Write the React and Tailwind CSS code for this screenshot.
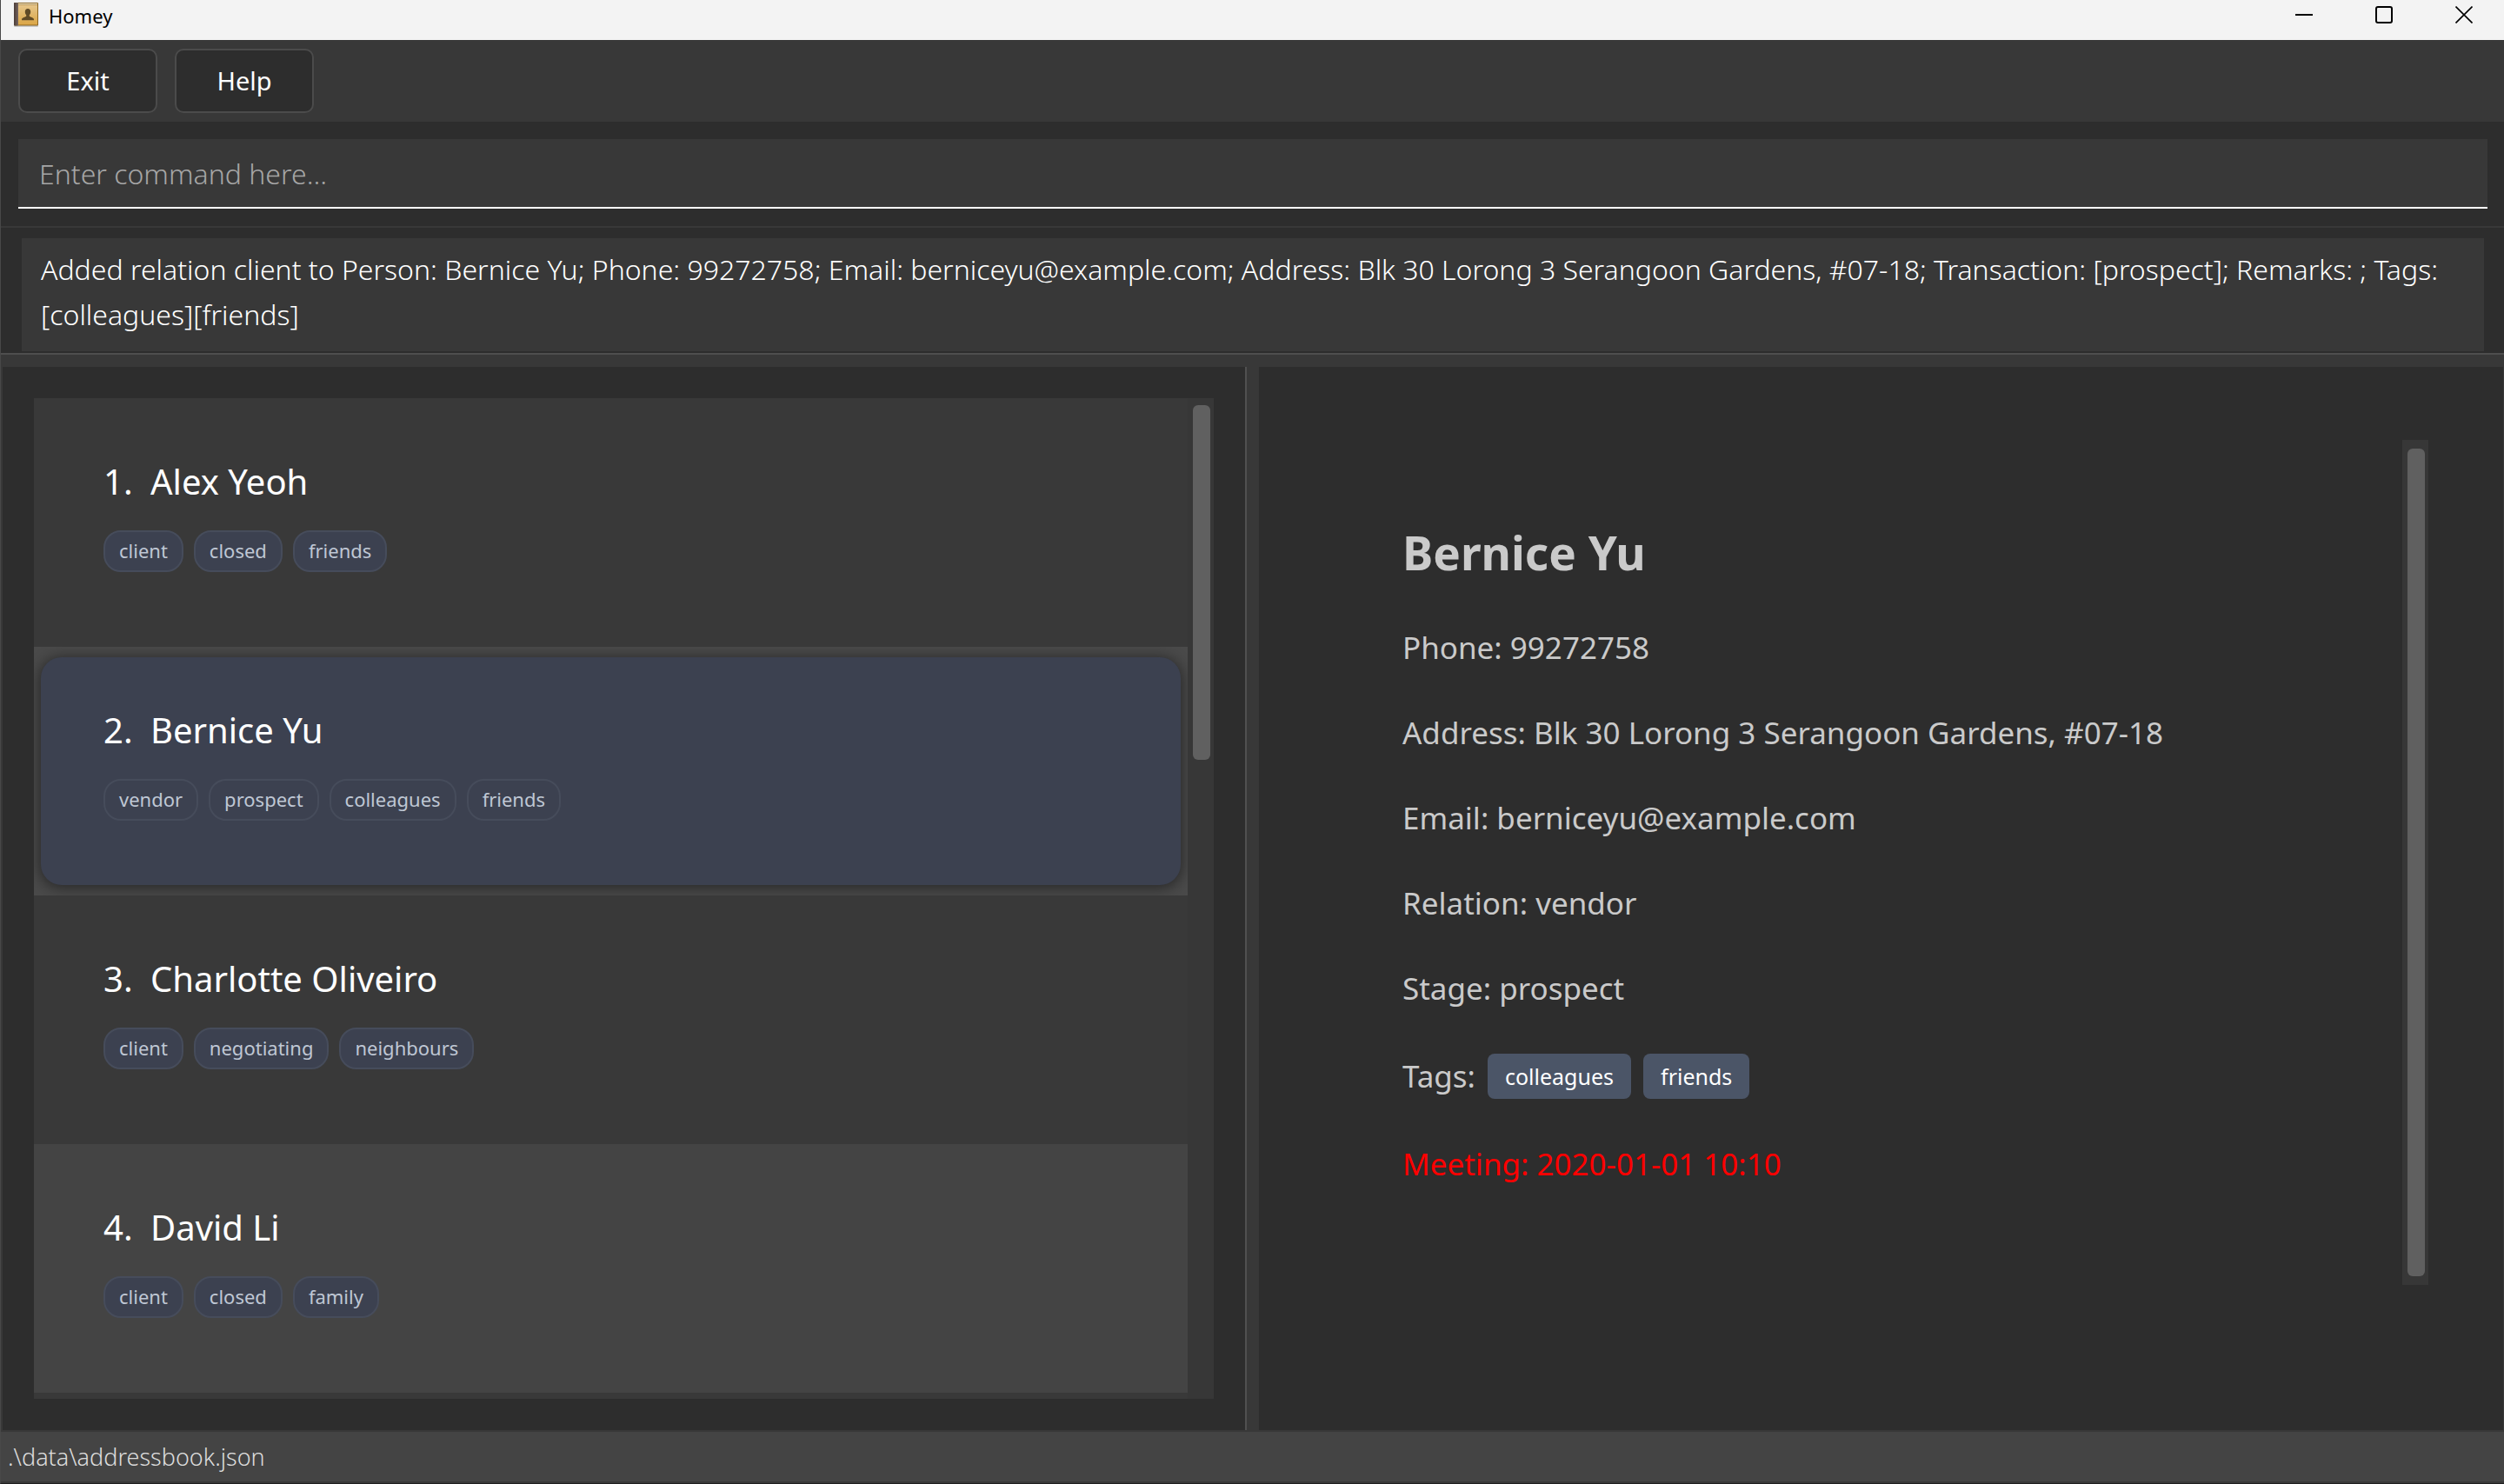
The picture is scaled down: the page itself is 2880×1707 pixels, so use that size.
import React from "react";

const people = [
  { name: "Alex Yeoh", tags: ["client", "closed", "friends"] },
  { name: "Bernice Yu", tags: ["vendor", "prospect", "colleagues", "friends"], selected: true },
  { name: "Charlotte Oliveiro", tags: ["client", "negotiating", "neighbours"] },
  { name: "David Li", tags: ["client", "closed", "family"] },
];

const details = [
  "Phone: 99272758",
  "Address: Blk 30 Lorong 3 Serangoon Gardens, #07-18",
  "Email: berniceyu@example.com",
  "Relation: vendor",
  "Stage: prospect",
];

function AddressBookIcon() {
  return (
    <svg width="30" height="30" viewBox="0 0 30 30" aria-hidden="true">
      <defs>
        <linearGradient id="cover" x1="0" y1="0" x2="0" y2="1">
          <stop offset="0" stopColor="#e6c68b" />
          <stop offset="1" stopColor="#dba646" />
        </linearGradient>
        <linearGradient id="spine" x1="0" y1="0" x2="1" y2="0">
          <stop offset="0" stopColor="#4a3c38" />
          <stop offset="1" stopColor="#75655f" />
        </linearGradient>
      </defs>
      <rect x="1" y="27" width="28" height="2" rx="1" fill="#c9c9c9" />
      <rect x="1" y="1" width="28" height="26.5" rx="1" fill="#8a6420" />
      <rect x="5" y="2" width="23" height="1" fill="#f6ecd2" />
      <rect x="5" y="3.5" width="23" height="23" fill="url(#cover)" />
      <rect x="1" y="1" width="5" height="26.5" rx="1" fill="url(#spine)" />
      <path
        d="M17 8c2 0 3.200 1.300 3.200 3.400 0 1.700-.6 3-1.400 3.800v1.600c.6.900 5.200 1.300 5.200 3.600v.9H10v-.9c0-2.300 4.600-2.700 5.200-3.600v-1.600c-.8-.8-1.400-2.100-1.400-3.800C13.800 9.300 15 8 17 8z"
        fill="#5f4a26"
      />
    </svg>
  );
}

function TitleBar() {
  const control = "flex h-full w-[92px] items-center justify-center";
  return (
    <header className="flex h-[46px] items-center justify-between bg-[#f3f3f3] pb-3 text-black">
      <div className="flex items-center gap-[11px] pl-[14px]">
        <AddressBookIcon />
        <h1 className="pt-[2px] text-[22px] leading-[30px]">Homey</h1>
      </div>
      <div className="flex h-full">
        <button aria-label="Minimize" className={control}>
          <svg width="20" height="20" viewBox="0 0 20 20"><path d="M0 10h20" stroke="#000" strokeWidth="2" /></svg>
        </button>
        <button aria-label="Maximize" className={control}>
          <svg width="20" height="20" viewBox="0 0 20 20"><rect x="1" y="1" width="18" height="18" rx="2" fill="none" stroke="#000" strokeWidth="2" /></svg>
        </button>
        <button aria-label="Close" className={control}>
          <svg width="20" height="20" viewBox="0 0 20 20"><path d="M0.500 0.500l19 19M19.500 0.500l-19 19" stroke="#000" strokeWidth="1.600" /></svg>
        </button>
      </div>
    </header>
  );
}

function PersonCell({ index, person }) {
  const background = person.selected ? "bg-[#4a4a4a]" : index % 2 ? "bg-[#444444]" : "bg-[#393939]";
  const card = person.selected ? "bg-[#3c4150] shadow-[0_2px_16px_2px_rgba(0,0,0,0.45)]" : "";
  return (
    <li className={`h-[286px] overflow-hidden px-2 py-3 ${background}`}>
      <div className={`flex h-full flex-col gap-[28px] rounded-[24px] px-[72px] pt-[56px] ${card}`}>
        <h2 className="flex text-[40px] leading-[56px] text-white">
          <span className="w-[54px]">{index + 1}.</span>
          {person.name}
        </h2>
        <ul className="flex gap-3">
          {person.tags.map((tag) => (
            <li
              key={tag}
              className="h-12 rounded-[20px] border-2 border-[#464c5b] bg-[#3c4150] px-4 text-[22px] leading-[42px] text-[#bfc7d4]"
            >
              {tag}
            </li>
          ))}
        </ul>
      </div>
    </li>
  );
}

export default function App() {
  return (
    <div className="flex h-screen flex-col border-b border-l border-b-[#1f1f1f] border-l-[#484848] bg-[#2d2d2d] font-['Noto_Sans','Open_Sans',sans-serif]">
      <TitleBar />

      <nav className="flex gap-5 bg-[#383838] px-5 py-[10px]">
        {["Exit", "Help"].map((label) => (
          <button
            key={label}
            className="h-[74px] w-[160px] rounded-[10px] border-2 border-[#4b4b4b] bg-[#2d2d2d] text-[29px] text-white"
          >
            {label}
          </button>
        ))}
      </nav>

      <div className="flex py-5 pr-[19px] pl-5">
        <input
          type="text"
          aria-label="Command"
          placeholder="Enter command here..."
          className="h-20 min-w-0 flex-1 border-b-2 border-white bg-[#383838] px-6 text-[32px] font-light text-white outline-none placeholder:text-[#a6a6a6]"
        />
      </div>

      <section className="border-y-2 border-t-[#383838] border-b-[#4e4e4e] pt-3 pr-[23px] pb-[2px] pl-6">
        <p className="h-[130px] bg-[#383838] px-[22px] pt-[10px] text-[32px] leading-[52px] font-light text-white">
          Added relation client to Person: Bernice Yu; Phone: 99272758; Email: berniceyu@example.com; Address: Blk 30
          Lorong 3 Serangoon Gardens, #07-18; Transaction: [prospect]; Remarks: ; Tags: [colleagues][friends]
        </p>
      </section>

      <main className="grid min-h-0 flex-1 grid-cols-[1fr_14px_1fr] border-t-[14px] border-r border-b-2 border-l-2 border-[#383838]">
        <section className="flex min-h-0 border-r-2 border-[#505050] p-9">
          <ul className="flex-1 overflow-hidden bg-[#393939]">
            {people.map((person, index) => (
              <PersonCell key={person.name} index={index} person={person} />
            ))}
          </ul>
          <div className="w-[30px] bg-[#373737] pt-2 pl-[6px]">
            <div className="h-[408px] w-5 rounded-[6px] bg-[#606060]" />
          </div>
        </section>
        <div className="bg-[#383838]" />
        <section className="flex min-h-0 px-[86px] pt-[84px] pb-[167px]">
          <article className="flex flex-1 flex-col gap-[50px] pt-[95px] pl-[79px] text-[35px] leading-[48px] text-[#cacaca]">
            <h2 className="text-[53px] leading-[70px] font-bold">Bernice Yu</h2>
            {details.map((line) => (
              <p key={line}>{line}</p>
            ))}
            <div className="flex h-[54px] items-center gap-[14px]">
              <span>Tags:</span>
              <ul className="flex gap-[14px] text-[25px] text-white">
                {["colleagues", "friends"].map((tag) => (
                  <li key={tag} className="flex h-[52px] items-center rounded-[8px] bg-[#4b5567] px-5">
                    {tag}
                  </li>
                ))}
              </ul>
            </div>
            <p className="text-[#ff0000]">Meeting: 2020-01-01 10:10</p>
          </article>
          <div className="flex w-[30px] bg-[#373737] py-[10px] pl-[6px]">
            <div className="w-5 rounded-[6px] bg-[#606060]" />
          </div>
        </section>
      </main>

      <footer className="flex h-[59px] items-center border-b-2 border-[#393939] bg-[#444444] px-2 pt-[2px] text-[27px] font-light text-[#dcdcdc]">
        .\data\addressbook.json
      </footer>
    </div>
  );
}
